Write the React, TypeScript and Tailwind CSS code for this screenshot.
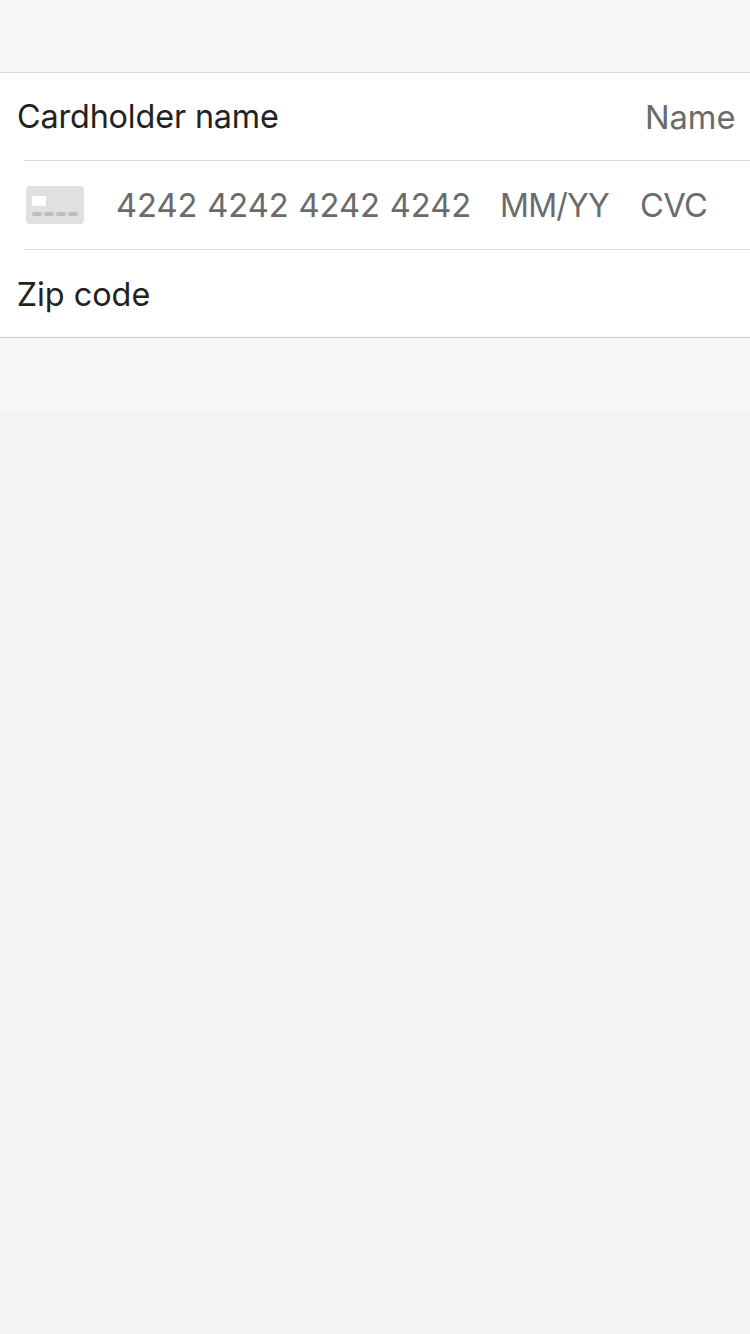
export default function App() {
  return (
    <div className="min-h-[1334px] w-full bg-[#f3f3f3] font-['Inter',sans-serif] text-[33px] leading-[88px] text-[#222]">
      <div className="bg-[#f7f7f5] py-[72px]">
        <div className="h-[266px] border-y border-t-[#dcdcdc] border-b-[#cccccc] bg-white">
          <div className="flex h-[87px] justify-between pl-[16.5px] pr-[14px]">
            <span className="origin-left scale-x-[0.98] leading-[86px] tracking-[-0.15px]">Cardholder name</span>
            <span className="origin-right scale-x-[0.99] text-[#6b6b6b]">Name</span>
          </div>
          <div className="ml-6 flex h-[90px] items-center border-y border-[#dcdcdc] text-[#6b6b6b]">
            <svg className="ml-0.5 w-[58px] shrink-0" height="38" viewBox="0 0 58 38">
              <rect width="58" height="38" rx="4" fill="#e0e0e0" />
              <rect x="6" y="10" width="14" height="10" rx="1" fill="#fff" />
              <path d="M8 28h6M20 28h6M32 28h6M44 28h6" stroke="#bdbdbd" strokeWidth="4" strokeLinecap="round" />
            </svg>
            <span className="ml-8 w-[384px] origin-left scale-x-[0.99] whitespace-nowrap [word-spacing:0.5px]">4242 4242 4242 4242</span>
            <span className="w-[140px] origin-left scale-x-[0.97] whitespace-nowrap tracking-[-0.8px]">MM/YY</span>
            <span className="origin-left scale-x-[0.99] tracking-[-0.7px]">CVC</span>
          </div>
          <div className="h-[87px] origin-left scale-x-[0.98] pl-[17px]">Zip code</div>
        </div>
      </div>
    </div>
  );
}
